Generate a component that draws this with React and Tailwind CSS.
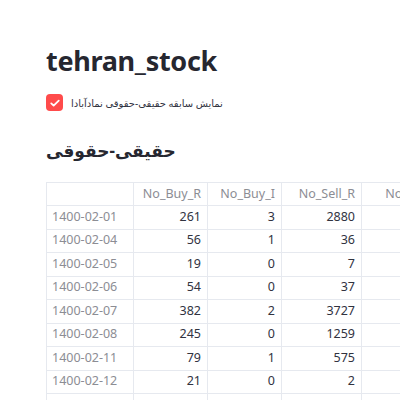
import React from "react";

const columns = ["No_Buy_R", "No_Buy_I", "No_Sell_R", "No_Sell_I"];

const rows = [
  ["1400-02-01", 261, 3, 2880],
  ["1400-02-04", 56, 1, 36],
  ["1400-02-05", 19, 0, 7],
  ["1400-02-06", 54, 0, 37],
  ["1400-02-07", 382, 2, 3727],
  ["1400-02-08", 245, 0, 1259],
  ["1400-02-11", 79, 1, 575],
  ["1400-02-12", 21, 0, 2],
  ["1400-02-13", 40, 0, 18],
];

const App = () => {
  return (
    <div className="h-[400px] w-[400px] overflow-hidden bg-white font-['Noto_Sans','DejaVu_Sans',sans-serif] text-[#31333f]">
      <div className="pl-[46px] pt-[40px]">
        <h1 className="text-[27px] font-bold leading-[42px] tracking-[-0.3px] text-[#262730]">tehran_stock</h1>

        <label className="mt-[12px] flex items-center gap-[8px]">
          <span className="flex h-[17px] w-[17px] items-center justify-center rounded-[4px] bg-[#ff4b4b]">
            <svg viewBox="0 0 16 16" className="h-[12px] w-[12px]" fill="none" stroke="white" strokeWidth="2.4" strokeLinecap="round" strokeLinejoin="round">
              <path d="M3 8.5l3.2 3L13 4.8" />
            </svg>
          </span>
          <span dir="rtl" className="text-[10px] leading-[16px] text-[#31333f]">نمایش سابقه حقیقی-حقوقی نمادآبادا</span>
        </label>

        <h2 dir="rtl" className="mt-[24px] w-fit text-[17px] font-bold leading-[32px] text-[#262730]">حقیقی-حقوقی</h2>

        <div className="mt-[15px] w-[400px]">
          <table className="w-[398px] table-fixed border-collapse border border-[#e6e9ef] text-[12.5px]">
            <colgroup>
              <col className="w-[87px]" />
              <col className="w-[74px]" />
              <col className="w-[74px]" />
              <col className="w-[80px]" />
              <col className="w-[83px]" />
            </colgroup>
            <thead>
              <tr className="h-[23px]">
                <th className="border border-[#e6e9ef]"></th>
                {columns.map((c) => (
                  <th key={c} className="border border-[#e6e9ef] pr-[6px] text-right font-normal text-[#8c8d94]">
                    {c}
                  </th>
                ))}
              </tr>
            </thead>
            <tbody>
              {rows.map((r) => (
                <tr key={r[0]} className="h-[23.5px]">
                  <td className="border border-[#e6e9ef] pl-[5px] text-left text-[#8c8d94]">{r[0]}</td>
                  {r.slice(1).map((v, i) => (
                    <td key={i} className="border border-[#e6e9ef] pr-[6px] text-right">
                      {v}
                    </td>
                  ))}
                  <td className="border border-[#e6e9ef]"></td>
                </tr>
              ))}
            </tbody>
          </table>
        </div>
      </div>
    </div>
  );
};

export default App;
